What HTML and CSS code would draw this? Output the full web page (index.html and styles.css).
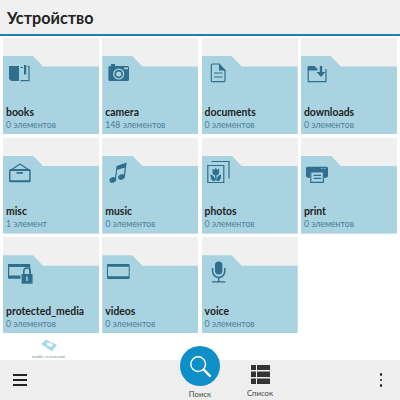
FILE: index.html
```html
<!DOCTYPE html>
<html lang="ru">
<head>
    <meta charset="UTF-8">
    <title>Устройство</title>
    <link rel="stylesheet" href="styles.css">
</head>
<body>
    <header class="title-bar"><h1>Устройство</h1></header>

    <main class="folders">
        <!-- books -->
        <div class="folder">
            <div class="folder-body">
                <svg class="icon" viewBox="0 0 26 24"><path d="M1 4h10v15H3.500L1 17z"/><path d="M12.500 5.500h2.500M19.500 4.500h1.500v14.200h-8.500" class="line"/><path d="M16 3h2.200v9.500H16z"/></svg>
                <div class="name">books</div>
                <div class="count">0 элементов</div>
            </div>
        </div>
        <!-- camera -->
        <div class="folder">
            <div class="folder-body">
                <svg class="icon" viewBox="0 0 26 24"><path d="M4 2h4v2h12.500a1.500 1.500 0 0 1 1.500 1.500V17.500a1.500 1.500 0 0 1-1.500 1.500H2.900a1.500 1.500 0 0 1-1.500-1.500V5.500A1.500 1.500 0 0 1 2.900 4H4z"/><circle cx="11.700" cy="12" r="5.600" class="cut"/><circle cx="11.700" cy="12" r="4.300"/><circle cx="11.700" cy="12" r="2.600" class="cut"/><path d="M17 5.500h4v1.800h-4z" class="cut"/></svg>
                <div class="name">camera</div>
                <div class="count">148 элементов</div>
            </div>
        </div>
        <!-- documents -->
        <div class="folder">
            <div class="folder-body">
                <svg class="icon" viewBox="0 0 26 24"><path d="M5.500 2h6.500l6 6.500V18.500a1.200 1.200 0 0 1-1.200 1.200H5.500a1.200 1.200 0 0 1-1.200-1.200V3.200A1.200 1.200 0 0 1 5.500 2z" class="line"/><path d="M12 1.500l6.700 7h-6.700z"/><path d="M7 10.500h8.500v1.100H7zM7 14.500h8.500v1.100H7z"/></svg>
                <div class="name">documents</div>
                <div class="count">0 элементов</div>
            </div>
        </div>
        <!-- downloads -->
        <div class="folder">
            <div class="folder-body">
                <svg class="icon" viewBox="0 0 26 24"><path d="M2.200 6v13.700h17.800V7" class="line"/><path d="M1.600 7.500V5a1 1 0 0 1 1-1H8.500l3 3v1.500H2.200z"/><path d="M13.800 4h2.400v6h3.300l-4.500 5-4.600-5h3.400z"/></svg>
                <div class="name">downloads</div>
                <div class="count">0 элементов</div>
            </div>
        </div>
        <!-- misc -->
        <div class="folder">
            <div class="folder-body">
                <svg class="icon" viewBox="0 0 26 24"><path d="M12 2 3 8M12 2l9 6" class="line"/><path fill-rule="evenodd" d="M2.500 7h18.700a1.500 1.500 0 0 1 1.500 1.500v10.300a1.500 1.500 0 0 1-1.500 1.500H2.500A1.500 1.500 0 0 1 1 18.800V8.500A1.500 1.500 0 0 1 2.500 7zM2.500 9v9.300h18.700V9z"/><path d="M8.500 10h6.500v1.800H8.500z"/></svg>
                <div class="name">misc</div>
                <div class="count">1 элемент</div>
            </div>
        </div>
        <!-- music -->
        <div class="folder">
            <div class="folder-body">
                <svg class="icon" viewBox="0 0 26 24"><path d="M9.500 4 19.600.5 17.900 15h-1.200l1-9.500-7.500 2.600-1.200 10H7.800z"/><ellipse cx="5.800" cy="18" rx="3.400" ry="2.700" transform="rotate(-20 5.800 18)"/><ellipse cx="14.500" cy="15" rx="3.400" ry="2.700" transform="rotate(-20 14.500 15)"/></svg>
                <div class="name">music</div>
                <div class="count">0 элементов</div>
            </div>
        </div>
        <!-- photos -->
        <div class="folder">
            <div class="folder-body">
                <svg class="icon" viewBox="0 0 26 24"><path d="M.8 3.500h16v17H.8z" class="line"/><path d="M4.500-.5h17.500v17" class="line"/><path d="M5.500 6.500 7.400 8 8.800 5.800 10.200 8l1.900-1.500v3.700a3 3 0 0 1-2.600 3v4.800H8.100v-4.800a3 3 0 0 1-2.600-3z"/><path d="M3.500 12.500c2.200.3 3.800 2 4.600 5.300v1.200H6.500c-2 0-3-3-3-6.500zM14.100 12.500c-2.200.3-3.800 2-4.600 5.300v1.200h1.600c2 0 3-3 3-6.500z"/></svg>
                <div class="name">photos</div>
                <div class="count">0 элементов</div>
            </div>
        </div>
        <!-- print -->
        <div class="folder">
            <div class="folder-body">
                <svg class="icon" viewBox="0 0 26 24"><path d="M1.500 4.800h19a1.500 1.500 0 0 1 1.500 1.500v7.500a2 2 0 0 1-2 2h-2V10H4v5.800H2a2 2 0 0 1-2-2V6.300a1.500 1.500 0 0 1 1.500-1.500z"/><path d="M4.800 10h12.500v10.300H4.800z" class="cut stroke"/><path d="M7.500 12.800h7.500v1.100H7.500zM7.500 15.800h7.500v1.100H7.500z"/><path d="M15.200 6h1.200v1.100h-1.200zM18 6h1.200v1.100H18z" class="cut"/></svg>
                <div class="name">print</div>
                <div class="count">0 элементов</div>
            </div>
        </div>
        <!-- protected_media -->
        <div class="folder">
            <div class="folder-body">
                <svg class="icon" viewBox="0 0 26 24"><path d="M.6 3.500h21v13.500H.6z" class="line"/><path d="M.3 3h21.700v3H.3zM.3 14.500h21.700V17.500H.3z"/><path d="M12.500 12h13v12h-13z" class="cut"/><path d="M15.800 13V10.300a3.200 3.200 0 0 1 6.400 0V13" class="line thick"/><path d="M14.200 13h9.800a.6.6 0 0 1 .6.600v8.500a.6.6 0 0 1-.6.6h-9.800a.6.6 0 0 1-.6-.6v-8.500a.6.6 0 0 1 .6-.6z"/><path d="M18.300 15.500h1.500v4.500h-1.500z" class="cut"/></svg>
                <div class="name">protected_media</div>
                <div class="count">0 элементов</div>
            </div>
        </div>
        <!-- videos -->
        <div class="folder">
            <div class="folder-body">
                <svg class="icon" viewBox="0 0 26 24"><path fill-rule="evenodd" d="M1 3h20.700a1 1 0 0 1 1 1v13a1 1 0 0 1-1 1H1a1 1 0 0 1-1-1V4a1 1 0 0 1 1-1zM1 5.800v9.400h20.700V5.800z"/></svg>
                <div class="name">videos</div>
                <div class="count">0 элементов</div>
            </div>
        </div>
        <!-- voice -->
        <div class="folder">
            <div class="folder-body">
                <svg class="icon" viewBox="0 0 26 24"><rect x="8" y=".4" width="7.400" height="13" rx="3.700"/><path d="M5.600 7v3.300a6.100 6.100 0 0 0 12.200 0V7" class="line thick"/><path d="M11 16h1.400v4.300H11zM5 20.200h13.400v1.200H5z"/></svg>
                <div class="name">voice</div>
                <div class="count">0 элементов</div>
            </div>
        </div>
    </main>

    <div class="watermark">
        <svg viewBox="0 0 18 13"><path d="M6 .5 17 6 12 12.500 1 5z" fill="#a6dcec"/><path d="M7 3.500l4 .5 2 2.500-2.500 1.500-1-1-2 0z" fill="#fff"/></svg>
        <span>mobile-review.com</span>
    </div>

    <footer class="action-bar">
        <div class="menu-icon"><i></i><i></i><i></i></div>
        <div class="action">
            <svg class="list-icon" viewBox="0 0 19 19"><path d="M0 0h5v5H0zM6 0h13v5H6zM0 6.500h5v5.500H0zM6 6.500h13v5.500H6zM0 13.500h5V19H0zM6 13.500h13V19H6z"/></svg>
            <span>Список</span>
        </div>
        <div class="more-icon"><i></i><i></i><i></i></div>
        <div class="search-action">
            <div class="search-circle">
                <svg viewBox="0 0 24 24"><circle cx="10" cy="10" r="8" fill="none" stroke="#fff" stroke-width="1.600"/><path d="M16 16l7 7" stroke="#fff" stroke-width="2.600" stroke-linecap="round"/></svg>
            </div>
            <span>Поиск</span>
        </div>
    </footer>
</body>
</html>
```
FILE: styles.css
```css
body {
    margin: 0;
    width: 400px;
    height: 400px;
    overflow: hidden;
    position: relative;
    background: #fff;
    font-family: Lato, Roboto, sans-serif;
}

.title-bar {
    height: 34px;
    background: #f0f0f0;
    border-bottom: 2px solid #1f7fae;
    display: flex;
    align-items: center;
    padding-left: 7px;
}

.title-bar h1 {
    margin: 0;
    font-size: 16.200px;
    font-weight: 700;
    color: #222;
}

.folders {
    display: grid;
    grid-template-columns: repeat(4, 96px);
    grid-auto-rows: 96px;
    column-gap: 3.300px;
    row-gap: 3.600px;
    padding: 2px 3px 0;
}

.folder {
    background: #f0f0f0;
    display: flex;
    flex-direction: column;
    justify-content: flex-end;
}

.folder-body {
    height: 78px;
    box-sizing: border-box;
    background: #a9d3e0;
    clip-path: polygon(0 0, 30px 0, 40px 10.500px, 100% 10.500px, 100% 100%, 0 100%);
    padding: 6px 0 4.500px 3px;
    display: flex;
    flex-direction: column;
}

.icon {
    width: 26px;
    height: 24px;
    margin-left: 2px;
    margin-bottom: auto;
    overflow: visible;
    fill: #2f6f8d;
}

.line {
    fill: none;
    stroke: #2f6f8d;
    stroke-width: 1.200px;
}

.line.thick {
    stroke-width: 1.500px;
}

.cut {
    fill: #a9d3e0;
}

.cut.stroke {
    stroke: #2f6f8d;
    stroke-width: 1.200px;
}

.name {
    font-size: 10.400px;
    font-weight: 700;
    line-height: 11px;
    margin-bottom: 1px;
    color: #222;
}

.count {
    font-size: 8.700px;
    line-height: 11px;
    color: #4a7f97;
}

.watermark {
    position: absolute;
    top: 339px;
    left: 32px;
    width: 33px;
    display: flex;
    flex-direction: column;
    align-items: center;
    gap: 2px;
}

.watermark svg {
    width: 18px;
    height: 13px;
}

.watermark span {
    font-size: 4px;
    line-height: 5px;
    white-space: nowrap;
    color: #7d8f99;
}

.action-bar {
    position: absolute;
    left: 0;
    right: 0;
    bottom: 0;
    height: 40px;
    background: #eeeeee;
    display: flex;
    align-items: center;
    padding: 0 18px 0 13px;
}

.menu-icon {
    display: flex;
    flex-direction: column;
    gap: 3.500px;
}

.menu-icon i {
    display: block;
    width: 14px;
    height: 1.500px;
    background: #222;
}

.action {
    width: 30px;
    display: flex;
    flex-direction: column;
    align-items: center;
    align-self: flex-start;
    gap: 4px;
    margin: 5px 0 0 218px;
}

.list-icon {
    width: 19px;
    height: 19px;
    fill: #333;
}

.action span,
.search-action span {
    font-size: 7.800px;
    line-height: 10px;
    color: #444;
}

.more-icon {
    display: flex;
    flex-direction: column;
    gap: 3px;
    margin-left: auto;
}

.more-icon i {
    display: block;
    width: 2.500px;
    height: 2.500px;
    border-radius: 50%;
    background: #222;
}

/* выступает над панелью */
.search-action {
    position: absolute;
    left: 180px;
    top: -14px;
    width: 40px;
    display: flex;
    flex-direction: column;
    align-items: center;
    gap: 3px;
}

.search-circle {
    width: 40px;
    height: 40px;
    border-radius: 50%;
    background: #0f8fc7;
    display: flex;
    align-items: center;
    justify-content: center;
}

.search-circle svg {
    width: 22px;
    height: 22px;
}
```
